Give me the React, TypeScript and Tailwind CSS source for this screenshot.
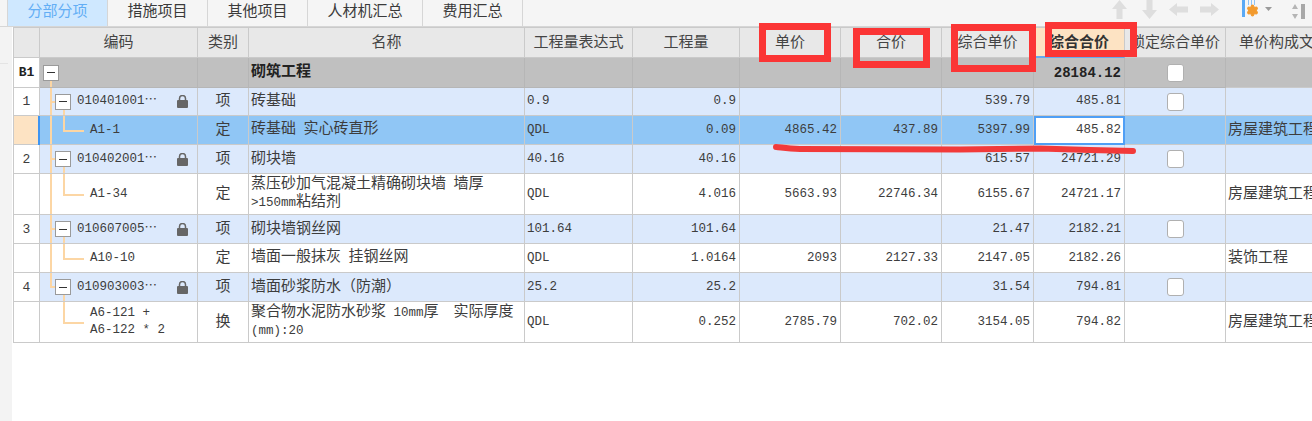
import React from "react";
import { Settings } from "lucide-react";

const FONT = { fontFamily: '"Liberation Mono","Noto Sans CJK SC",monospace' };
const COLS = "grid-cols-[26px_158px_51px_276px_108px_107px_101px_101px_92px_91px_101px_1fr]";

type Kind = "group" | "item" | "sel" | "sub";
type Row = {
  h: string; kind: Kind; num?: string; code?: string[]; locked?: boolean; cat?: string; name?: string[];
  expr?: string; qty?: string; price?: string; total?: string; cprice?: string; ctotal?: string; check?: boolean; tpl?: string; tree: "root" | "item" | "sub"; last?: boolean; noTrunk?: boolean;
};

const rows: Row[] = [
  { h: "h-[30px]", kind: "group", num: "B1", name: ["砌筑工程"], ctotal: "28184.12", check: true, tree: "root" },
  { h: "h-[28px]", kind: "item", num: "1", code: ["010401001⋯"], locked: true, cat: "项", name: ["砖基础"], expr: "0.9", qty: "0.9", cprice: "539.79", ctotal: "485.81", check: true, tree: "item" },
  { h: "h-[29px]", kind: "sel", code: ["A1-1"], cat: "定", name: ["砖基础 实心砖直形"], expr: "QDL", qty: "0.09", price: "4865.42", total: "437.89", cprice: "5397.99", ctotal: "485.82", tpl: "房屋建筑工程", tree: "sub" },
  { h: "h-[29px]", kind: "item", num: "2", code: ["010402001⋯"], locked: true, cat: "项", name: ["砌块墙"], expr: "40.16", qty: "40.16", cprice: "615.57", ctotal: "24721.29", check: true, tree: "item" },
  { h: "h-[41px]", kind: "sub", code: ["A1-34"], cat: "定", name: ["蒸压砂加气混凝土精确砌块墙 墙厚", ">150mm粘结剂"], expr: "QDL", qty: "4.016", price: "5663.93", total: "22746.34", cprice: "6155.67", ctotal: "24721.17", tpl: "房屋建筑工程", tree: "sub" },
  { h: "h-[29px]", kind: "item", num: "3", code: ["010607005⋯"], locked: true, cat: "项", name: ["砌块墙钢丝网"], expr: "101.64", qty: "101.64", cprice: "21.47", ctotal: "2182.21", check: true, tree: "item" },
  { h: "h-[29px]", kind: "sub", code: ["A10-10"], cat: "定", name: ["墙面一般抹灰 挂钢丝网"], expr: "QDL", qty: "1.0164", price: "2093", total: "2127.33", cprice: "2147.05", ctotal: "2182.26", tpl: "装饰工程", tree: "sub" },
  { h: "h-[29px]", kind: "item", num: "4", code: ["010903003⋯"], locked: true, cat: "项", name: ["墙面砂浆防水（防潮）"], expr: "25.2", qty: "25.2", cprice: "31.54", ctotal: "794.81", check: true, tree: "item", last: true },
  { h: "h-[41px]", kind: "sub", code: ["A6-121 +", "A6-122 * 2"], cat: "换", name: ["聚合物水泥防水砂浆 10mm厚  实际厚度", "(mm):20"], expr: "QDL", qty: "0.252", price: "2785.79", total: "702.02", cprice: "3154.05", ctotal: "794.82", tpl: "房屋建筑工程", tree: "sub", noTrunk: true },
];

const bg: Record<Kind, string> = { group: "bg-[#c0c0c0]", item: "bg-[#dce9fc]", sel: "bg-[#90c6f5]", sub: "bg-white" };

function Cell({ dark, className = "", children }: { dark?: boolean; className?: string; children?: React.ReactNode }) {
  return <div className={`border-r border-b ${dark ? "border-[#b6b6b6]" : "border-[#cacaca]"} min-w-0 overflow-hidden flex items-center text-[#3d3d3d] ${className}`}>{children}</div>;
}

function Minus() {
  return (
    <span className="relative z-10 w-[16px] h-[16px] border border-[#9a9a9a] bg-white flex items-center justify-center shrink-0">
      <span className="w-[8px] h-px bg-[#333]" />
    </span>
  );
}

function Padlock() {
  return (
    <svg width="11" height="13" viewBox="0 0 11 13" className="shrink-0">
      <path d="M2.5 6V3.5a3 3 0 0 1 6 0V6" fill="none" stroke="#666" strokeWidth="1.5" />
      <rect x="0" y="5" width="11" height="8" rx="1" fill="#666" />
    </svg>
  );
}

function Mix({ text }: { text: string }) {
  return (
    <>
      {text.split(/([\x00-\x7f]+)/).map((s, i) =>
        /^[\x00-\x7f]+$/.test(s) ? <span key={i} className="text-[12.5px]">{s}</span> : <span key={i}>{s}</span>
      )}
    </>
  );
}

function Head({ label, active }: { label: string; active?: boolean }) {
  return (
    <div className={`border-r border-b border-[#cacaca] pt-[2px] flex items-center justify-center whitespace-nowrap overflow-hidden ${active ? "bg-[#fde3c3] font-bold border-b-2 border-b-[#64a9f0] text-[#333]" : "bg-[#e8e8e8] text-[#444]"}`}>{label}</div>
  );
}

function CodeCell({ r }: { r: Row }) {
  const isGroup = r.tree === "root";
  const isItem = r.tree === "item";
  const isSub = r.tree === "sub";
  return (
    <Cell dark={isGroup} className="relative">
      {!r.last && !isGroup && !r.noTrunk && <span className="absolute left-[10px] top-0 bottom-[-1px] w-[2px] bg-[#fcd6a4]" />}
      {isGroup && <span className="absolute left-[10px] top-[20px] bottom-[-1px] w-[2px] bg-[#fcd6a4]" />}
      {r.last && <span className="absolute left-[10px] top-0 h-[14px] w-[2px] bg-[#fcd6a4]" />}
      {isItem && <span className="absolute left-[10px] top-[13px] w-[6px] h-[2px] bg-[#fcd6a4]" />}
      {isItem && <span className="absolute left-[23px] top-[20px] bottom-[-1px] w-[2px] bg-[#fcd6a4]" />}
      {isSub && <span className="absolute left-[23px] top-0 h-1/2 w-[2px] bg-[#fcd6a4]" />}
      {isSub && <span className="absolute left-[23px] top-1/2 w-[21px] h-[2px] bg-[#fcd6a4]" />}
      {isGroup && <span className="ml-[3px]"><Minus /></span>}
      {isItem && (
        <div className="flex items-center w-full pl-[15px] pr-[9px]">
          <Minus />
          <span className="ml-[6px] flex-1 whitespace-nowrap text-[12.5px]">{r.code![0]}</span>
          <Padlock />
        </div>
      )}
      {isSub && (
        <div className="pl-[50px] text-[12.5px] leading-[17px] whitespace-pre">
          {r.code!.map((c) => <div key={c}>{c}</div>)}
        </div>
      )}
    </Cell>
  );
}

function Num({ v, bold, dark }: { v?: string; bold?: boolean; dark?: boolean }) {
  return <Cell dark={dark} className={`justify-end pr-[3px] ${bold ? "font-bold text-[#222] text-[14px]" : "text-[12.5px]"}`}>{v}</Cell>;
}

function ArrowV({ down }: { down?: boolean }) {
  return (
    <svg width="15" height="19" viewBox="0 0 15 19" style={{ transform: down ? "rotate(180deg)" : undefined }}>
      <path d="M7.5 0 L15 9 L10.5 9 L10.5 19 L4.5 19 L4.5 9 L0 9 Z" fill="#dedede" />
    </svg>
  );
}

function ArrowH({ right }: { right?: boolean }) {
  return (
    <svg width="19" height="13" viewBox="0 0 19 13" style={{ transform: right ? "rotate(180deg)" : undefined }}>
      <path d="M0 6.5 L8 0 L8 3.5 L19 3.5 L19 9.5 L8 9.5 L8 13 Z" fill="#dedede" />
    </svg>
  );
}

function Toolbar() {
  return (
    <div className="absolute left-[1112px] top-0 flex items-start h-[26px]">
      <div className="mr-[15px]"><ArrowV /></div>
      <div className="mr-[12px]"><ArrowV down /></div>
      <div className="mt-[3px] mr-[12px]"><ArrowH /></div>
      <div className="mt-[3px] mr-[23px]"><ArrowH right /></div>
      <div className="relative w-[30px] h-[20px] mr-[20px]">
        <span className="absolute left-0 top-0 w-[3px] h-[17px] bg-[#5aa9f5]" />
        <span className="absolute left-[6px] top-0 w-[1px] h-[5px] bg-[#8fc3f5]" />
        <span className="absolute left-[9px] top-0 w-[1px] h-[5px] bg-[#8fc3f5]" />
        <span className="absolute left-[12px] top-0 w-[1px] h-[5px] bg-[#8fc3f5]" />
        <Settings className="absolute left-[4px] top-[4px]" size={13} fill="#f29a2e" stroke="#f29a2e" strokeWidth={2} />
        <svg className="absolute left-[23px] top-[7px]" width="7" height="4" viewBox="0 0 7 4"><path d="M0 0H7L3.5 4Z" fill="#9a9a9a" /></svg>
      </div>
      <svg className="mt-[4px]" width="13" height="15" viewBox="0 0 13 15">
        <path d="M3 0 L6 5 H0Z M3 15 L6 10 H0Z" fill="#b5b5b5" />
        <rect x="9" y="0" width="4" height="15" fill="#a8a8a8" />
      </svg>
    </div>
  );
}

const TABS = ["措施项目", "其他项目", "人材机汇总", "费用汇总"];
const TAB_W = ["w-[100px]", "w-[100px]", "w-[115px]", "w-[100px]"];

export default function App() {
  return (
    <div style={FONT} className="relative w-[1312px] h-[421px] overflow-hidden bg-white text-[15px] leading-none">
      <div className="flex h-[27px] bg-[#f5f5f5] border-b border-[#d6d6d6]">
        <div className="w-[8px] border-r border-[#d6d6d6]" />
        <div className="w-[100px] bg-[#cfe8ff] text-[#63aef5] flex items-center justify-center border-r border-[#d6d6d6] pb-[2px]">分部分项</div>
        {TABS.map((t, i) => (
          <div key={t} className={`${TAB_W[i]} flex items-center justify-center text-[#3a3a3a] border-r border-[#d6d6d6] pb-[2px]`}>{t}</div>
        ))}
      </div>
      <Toolbar />

      <div className="flex h-[394px]">
        <div className="w-[12px] mr-px bg-[#f3f3f3] shrink-0 flex flex-col">
          <div className="mt-[36px] w-[8px] h-px bg-[#e4e4e4]" />
        </div>
        <div className="flex-1 min-w-0 self-start border-l border-t border-[#cacaca]">
          <div className={`grid ${COLS} h-[30px]`}>
            <Head label="" />
            <Head label="编码" />
            <Head label="类别" />
            <Head label="名称" />
            <Head label="工程量表达式" />
            <Head label="工程量" />
            <Head label="单价" />
            <Head label="合价" />
            <Head label="综合单价" />
            <Head label="综合合价" active />
            <Head label="锁定综合单价" />
            <div className="bg-[#e8e8e8] border-b border-[#cacaca] text-[#444] pl-[13px] pt-[2px] flex items-center whitespace-nowrap">单价构成文件</div>
          </div>

          {rows.map((r, i) => {
            const dark = r.kind === "group";
            return (
              <div key={i} className={`grid ${COLS} ${r.h} ${bg[r.kind]}`}>
                <Cell className={`justify-center text-[13px] ${r.kind === "sel" ? "bg-[#fde3c3]" : "bg-white"} ${dark ? "font-bold text-[#222]" : ""}`}>{r.num}</Cell>
                <div className={`min-w-0 grid ${r.kind === "sel" ? "border-l-2 border-[#3e95f2] -ml-[2px]" : ""}`}><CodeCell r={r} /></div>
                <Cell dark={dark} className="justify-center">{r.cat}</Cell>
                <Cell dark={dark} className={`pl-[2px] leading-[17px] whitespace-pre ${dark ? "font-bold text-[#222]" : ""}`}>
                  <div>{r.name!.map((n) => <div key={n}><Mix text={n} /></div>)}</div>
                </Cell>
                <Cell dark={dark} className="pl-[2px] text-[12.5px]">{r.expr}</Cell>
                <Num dark={dark} v={r.qty} />
                <Num dark={dark} v={r.price} />
                <Num dark={dark} v={r.total} />
                <Num dark={dark} v={r.cprice} />
                {r.kind === "sel"
                  ? <div className="min-w-0 flex items-center justify-end pr-[2px] text-[12.5px] text-[#3d3d3d] bg-white border-2 border-[#4f9ff5]">{r.ctotal}</div>
                  : <Num dark={dark} v={r.ctotal} bold={dark} />}
                <Cell dark={dark} className="justify-center">
                  {r.check && <span className="w-[17px] h-[18px] bg-white border border-[#b0b0b0] rounded-[3px]" />}
                </Cell>
                <div className="border-b border-[#cacaca] flex items-center pl-[2px] whitespace-nowrap text-[#3d3d3d]">{r.tpl}</div>
              </div>
            );
          })}
        </div>
      </div>

      {/* hand-drawn red annotations on top of the screenshot */}
      <div className="absolute left-[759px] top-[23px] w-[72px] h-[39px] border-[7px] border-[#fb3535]" />
      <div className="absolute left-[853px] top-[28px] w-[77px] h-[40px] border-[7px] border-[#fb3535]" />
      <div className="absolute left-[951px] top-[24px] w-[85px] h-[48px] border-[7px] border-[#fb3535]" />
      <div className="absolute left-[1045px] top-[22px] w-[92px] h-[35px] border-[7px] border-[#fb3535]" />
      <svg className="absolute left-[770px] top-[142px]" width="370" height="14" viewBox="0 0 370 14" fill="none">
        <path d="M6 5 C10 5 16 7 30 7 L190 7.5 L270 6.5 L320 8 L363 9" stroke="#f23a3a" strokeWidth="6" strokeLinecap="round" />
      </svg>
    </div>
  );
}
